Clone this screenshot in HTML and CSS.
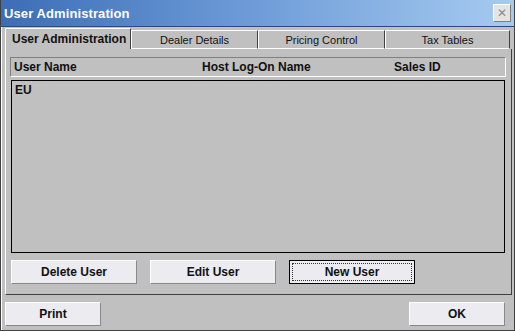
FILE: index.html
```html
<!DOCTYPE html>
<html>
<head>
<meta charset="utf-8">
<link rel="stylesheet" href="styles.css">
</head>
<body>
<div class="window">
  <div class="titlebar">
    <span class="title">User Administration</span>
    <span class="close">&#x2715;</span>
  </div>
  <div class="content">
    <div class="tabs">
      <div class="tab active">User Administration</div>
      <div class="tab">Dealer Details</div>
      <div class="tab">Pricing Control</div>
      <div class="tab last">Tax Tables</div>
    </div>
    <div class="panel">
      <div class="header">
        <span class="col c1">User Name</span>
        <span class="col c2">Host Log-On Name</span>
        <span class="col c3">Sales ID</span>
      </div>
      <div class="list">
        <div class="row">EU</div>
      </div>
      <div class="actions">
        <button class="btn">Delete User</button>
        <button class="btn">Edit User</button>
        <button class="btn default"><span class="focus">New User</span></button>
      </div>
    </div>
    <div class="footer">
      <button class="btn small">Print</button>
      <button class="btn small">OK</button>
    </div>
  </div>
</div>
</body>
</html>
```
FILE: styles.css
```css
* { box-sizing: border-box; }
html, body { margin: 0; padding: 0; }
body {
  width: 515px; height: 331px; overflow: hidden;
  background: #c0c0c0;
  font-family: "Liberation Sans", Arial, sans-serif;
}
.window {
  width: 515px; height: 331px;
  background: #c0c0c0;
  border: 1px solid #404040;
  border-top: none;
  display: flex; flex-direction: column;
}
.titlebar {
  height: 27px;
  background: linear-gradient(to right, #3c6db5 0%, #6a98d6 45%, #a6cbf0 100%);
  display: flex; align-items: center; justify-content: space-between;
  padding: 0 3px 0 3px;
  border-bottom: 1px solid #2a4a80;
}
.title {
  color: #fff; font-weight: bold; font-size: 13px; letter-spacing: 0.1px;
  padding-top: 1px;
}
.close {
  width: 18px; height: 18px;
  background: #e4e4e4;
  border: 1px solid #fff;
  border-right-color: #808080; border-bottom-color: #808080;
  color: #8a8a8a; font-size: 12px; line-height: 16px; text-align: center;
}
.content {
  flex: 1;
  border-left: 1px solid #fff;
  padding: 1px 2px 0 2px;
  display: flex; flex-direction: column;
}
.tabs {
  display: flex; height: 21px; align-items: flex-end;
  padding-left: 1px;
}
.tab {
  height: 19px;
  border-top: 1px solid #fff; border-left: 1px solid #fff;
  border-right: 1px solid #404040;
  border-bottom: 1px solid #fff;
  font-size: 11px; color: #111;
  display: flex; align-items: center; justify-content: center;
  width: 127px;
}
.tab.last { width: 125px; }
.tab.active {
  height: 21px; width: 126px;
  border-bottom: none;
  font-weight: bold; font-size: 12px;
  justify-content: flex-start; padding-left: 6px;
}
.panel {
  height: 246px;
  border-left: 1px solid #fff;
  border-right: 1px solid #404040;
  border-bottom: 1px solid #404040;
  margin-left: 1px;
  width: 507px;
  padding: 8px 5px 0 4px;
  display: flex; flex-direction: column;
}
.header {
  height: 20px;
  border: 1px solid #808080;
  border-right-color: #fff; border-bottom-color: #fff;
  display: flex; align-items: center;
  font-weight: bold; font-size: 12px; color: #111;
}
.col.c1 { width: 191px; padding-left: 3px; }
.col.c2 { width: 192px; }
.list {
  height: 173px;
  margin: 3px 1px 0 1px;
  border: 1px solid #000;
  background: #c0c0c0;
  padding: 2px 3px;
}
.row { font-weight: bold; font-size: 12px; color: #111; }
.actions {
  display: flex; gap: 13px; margin-top: 7px; padding-left: 1px;
}
.btn {
  width: 126px; height: 24px;
  background: #ebebf0;
  border: 1px solid #fff;
  border-right-color: #888; border-bottom-color: #888;
  font-family: "Liberation Sans", Arial, sans-serif;
  font-weight: bold; font-size: 12px; color: #111;
  padding: 0; margin: 0;
  display: flex; align-items: center; justify-content: center;
}
.btn.default {
  border: 1px solid #000;
  padding: 2px;
}
.focus {
  width: 100%; height: 100%;
  border: 1px dotted #333;
  display: flex; align-items: center; justify-content: center;
}
.footer {
  display: flex; justify-content: space-between;
  padding: 7px 7px 0 1px;
}
.btn.small { width: 96px; height: 24px; }
```
